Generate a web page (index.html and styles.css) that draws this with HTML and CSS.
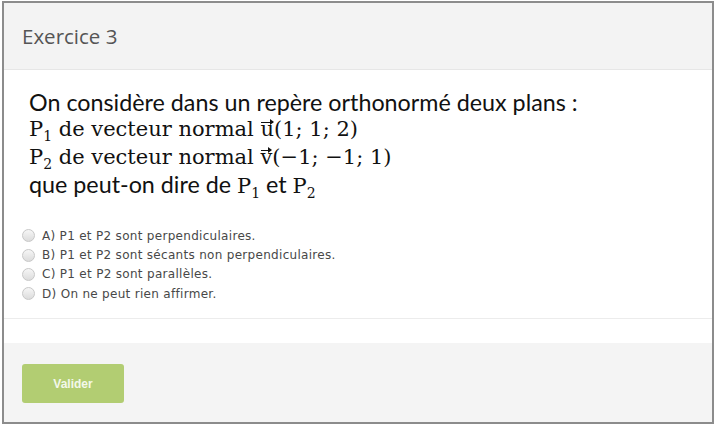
FILE: index.html
```html
<!DOCTYPE html>
<html>
<head>
<meta charset="utf-8">
<link rel="stylesheet" href="styles.css">
</head>
<body>
<div class="card">
  <div class="card-header">Exercice 3</div>
  <div class="card-body">
    <div class="question">
      <div class="q-line">On considère dans un repère orthonormé deux plans :</div>
      <div class="m-line">P<sub>1</sub> de vecteur normal <span class="vec">u</span>(1; 1; 2)</div>
      <div class="m-line">P<sub>2</sub> de vecteur normal <span class="vec">v</span>(−1; −1; 1)</div>
      <div class="q-line">que peut-on dire de <span class="m">P<sub>1</sub></span> et <span class="m">P<sub>2</sub></span></div>
    </div>
    <ul class="options">
      <li><span class="radio"></span>A) P1 et P2 sont perpendiculaires.</li>
      <li><span class="radio"></span>B) P1 et P2 sont sécants non perpendiculaires.</li>
      <li><span class="radio"></span>C) P1 et P2 sont parallèles.</li>
      <li><span class="radio"></span>D) On ne peut rien affirmer.</li>
    </ul>
  </div>
  <div class="spacer"></div>
  <div class="card-footer">
    <button class="btn">Valider</button>
  </div>
</div>
</body>
</html>
```
FILE: styles.css
```css
html, body { margin: 0; padding: 0; background: #ffffff; }
body { padding: 1px 2px 0 2px; }
.card {
  box-sizing: border-box;
  width: 712px;
  height: 423px;
  border: 2px solid #8c8c8c;
  display: flex;
  flex-direction: column;
  background: #fff;
}
.card-header {
  box-sizing: border-box;
  height: 67px;
  background: #f3f3f3;
  border-bottom: 1px solid #e6e6e6;
  padding: 0 0 0 18px;
  display: flex;
  align-items: center;
  font-family: "Open Sans", "Liberation Sans", sans-serif;
  font-size: 20.5px;
  color: #555;
}
.card-body {
  box-sizing: border-box;
  height: 249px;
  border-bottom: 1px solid #ececec;
  padding: 19px 0 0 25px;
}
.question { color: #111; }
.q-line {
  font-family: "Lato", "Open Sans", sans-serif;
  font-size: 23.3px;
  line-height: 27.3px;
}
.m-line, .m {
  font-family: "DejaVu Serif", "Liberation Serif", serif;
  font-size: 21px;
  line-height: 27.3px;
}
sub { font-size: 14px; line-height: 0; vertical-align: -5px; }
.vec { position: relative; display: inline-block; }
.vec::before {
  content: "";
  position: absolute;
  left: 1px; right: 1px; top: 6px;
  border-top: 1px solid #111;
}
.vec::after {
  content: "";
  position: absolute;
  right: 0px; top: 3px;
  border-left: 4px solid #111;
  border-top: 3px solid transparent;
  border-bottom: 3px solid transparent;
}
.options {
  list-style: none;
  margin: 26px 0 0 -7px;
  padding: 0;
  font-family: "DejaVu Sans", "Liberation Sans", sans-serif;
  font-size: 12px;
  letter-spacing: 0.3px;
  color: #484848;
}
.options li {
  display: flex;
  align-items: center;
  height: 19.3px;
}
.radio {
  box-sizing: border-box;
  width: 13px; height: 13px;
  border-radius: 50%;
  border: 1px solid #c8c8c8;
  background: linear-gradient(#f6f6f6, #dcdcdc);
  margin-right: 7px;
}
.spacer { height: 24px; }
.card-footer {
  flex: 1;
  background: #f4f4f4;
  padding: 21px 0 0 18px;
}
.btn {
  width: 102px;
  height: 39px;
  border: none;
  border-radius: 3px;
  background: #b2cd72;
  color: #f4f8ea;
  font-family: "Liberation Sans", "Open Sans", sans-serif;
  font-size: 12px;
  font-weight: bold;
}
```
